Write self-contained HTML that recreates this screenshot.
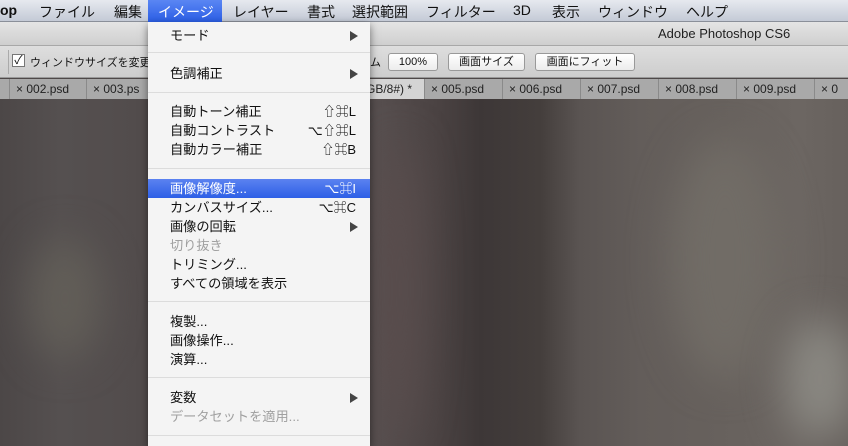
<!DOCTYPE html>
<html><head><meta charset="utf-8"><style>
*{margin:0;padding:0;box-sizing:border-box}
body{width:848px;height:446px;overflow:hidden;position:relative;font-family:"Liberation Sans","Noto Sans CJK JP",sans-serif;background:#4e4848}
.mb{position:absolute;left:0;top:0;width:848px;height:22px;background:linear-gradient(#e6e9ef,#c4cad6);border-bottom:1px solid #8a8f99;font-size:14px;color:#111}
.mb span{position:absolute;top:2px}
.tb{position:absolute;left:0;top:22px;width:848px;height:24px;background:linear-gradient(#e4e4e4,#cfcfcf);border-bottom:1px solid #a8a8a8;font-size:13px;color:#222}
.ob{position:absolute;left:0;top:46px;width:848px;height:32px;background:linear-gradient(#dedede,#cdcdcd);border-bottom:1px solid #999;font-size:11px;color:#111}
.btn{position:absolute;top:7px;height:18px;background:linear-gradient(#fff,#ececec);border:1px solid #999;border-radius:3px;font-size:11px;text-align:center;line-height:16px}
.tabs{position:absolute;left:0;top:79px;width:848px;height:20px;background:#a9a9a9;font-size:12px;color:#222}
.tab{position:absolute;top:0;height:20px;line-height:20px;border-right:1px solid #8a8a8a;padding-left:6px}
.cv{position:absolute;left:0;top:99px;width:848px;height:347px;overflow:hidden;background:linear-gradient(90deg,#4c4747 0,#555050 60px,#524c4c 140px,#574f4f 380px,#4a4242 440px,#3d3737 480px,#443e3c 540px,#5a5452 580px,#635d5a 640px,#67615d 720px,#6c6662 800px,#67615d 848px)}
.blob{position:absolute;border-radius:50%;filter:blur(20px)}
.menu{position:absolute;left:148px;top:22px;width:222px;height:424px;background:#f4f4f4;box-shadow:0 3px 8px rgba(0,0,0,.5);font-size:13.2px;color:#111}
.it{position:absolute;left:0;width:222px;height:19px;line-height:19px;padding-left:22px}
.it .k{position:absolute;right:14px;top:0;font-size:13px}
.ar{position:absolute;right:12px;top:5px;width:0;height:0;border-left:8px solid #444;border-top:5px solid transparent;border-bottom:5px solid transparent}
.g{color:#a0a0a0}
.sep{position:absolute;left:0;width:222px;height:1px;background:#dcdcdc}
.hl{background:linear-gradient(#5b82f0,#2d5fe6);color:#fff}
</style></head><body>
<div class="mb">
<span style="left:0;font-weight:bold">op</span>
<span style="left:39px">ファイル</span>
<span style="left:114px">編集</span>
<span style="left:148px;top:0;height:22px;width:74px;background:linear-gradient(#5a86f3,#2b5ee6)"></span>
<span style="left:158px;color:#fff">イメージ</span>
<span style="left:233px">レイヤー</span>
<span style="left:307px">書式</span>
<span style="left:352px">選択範囲</span>
<span style="left:426px">フィルター</span>
<span style="left:513px">3D</span>
<span style="left:552px">表示</span>
<span style="left:598px">ウィンドウ</span>
<span style="left:686px">ヘルプ</span>
</div>
<div class="tb"><span style="position:absolute;left:658px;top:4px">Adobe Photoshop CS6</span></div>
<div class="ob">
<span style="position:absolute;left:8px;top:4px;width:1px;height:24px;background:#aaa"></span>
<span style="position:absolute;left:12px;top:8px;width:13px;height:13px;border:1px solid #777;background:#fff;font-size:12px;line-height:11px;text-align:center">✓</span>
<span style="position:absolute;left:30px;top:8px">ウィンドウサイズを変更</span>
<span style="position:absolute;left:370px;top:8px">ム</span>
<div class="btn" style="left:388px;width:50px">100%</div>
<div class="btn" style="left:448px;width:77px">画面サイズ</div>
<div class="btn" style="left:535px;width:100px">画面にフィット</div>
</div>
<div class="tabs">
<div class="tab" style="left:0;width:10px;padding:0"></div>
<div class="tab" style="left:10px;width:77px">× 002.psd</div>
<div class="tab" style="left:87px;width:70px">× 003.ps</div>
<div class="tab" style="left:360px;width:65px;background:#d4d4d4">GB/8#) *</div>
<div class="tab" style="left:425px;width:78px">× 005.psd</div>
<div class="tab" style="left:503px;width:78px">× 006.psd</div>
<div class="tab" style="left:581px;width:78px">× 007.psd</div>
<div class="tab" style="left:659px;width:78px">× 008.psd</div>
<div class="tab" style="left:737px;width:78px">× 009.psd</div>
<div class="tab" style="left:815px;width:40px">× 0</div>
</div>
<div class="cv">
<div class="blob" style="left:30px;top:140px;width:70px;height:120px;background:#625e58"></div>
<div class="blob" style="left:670px;top:40px;width:110px;height:240px;background:#716c66"></div>
<div class="blob" style="left:785px;top:220px;width:70px;height:120px;background:#8a8882"></div>
<div class="blob" style="left:380px;top:40px;width:40px;height:300px;background:#5a4d4d"></div>
</div>
<div class="menu">
<div class="it" style="top:4px">モード<span class="ar"></span></div>
<div class="sep" style="top:30px"></div>
<div class="it" style="top:42px">色調補正<span class="ar"></span></div>
<div class="sep" style="top:70px"></div>
<div class="it" style="top:80px">自動トーン補正<span class="k">⇧⌘L</span></div>
<div class="it" style="top:99px">自動コントラスト<span class="k">⌥⇧⌘L</span></div>
<div class="it" style="top:118px">自動カラー補正<span class="k">⇧⌘B</span></div>
<div class="sep" style="top:146px"></div>
<div class="it hl" style="top:157px">画像解像度...<span class="k">⌥⌘I</span></div>
<div class="it" style="top:176px">カンバスサイズ...<span class="k">⌥⌘C</span></div>
<div class="it" style="top:195px">画像の回転<span class="ar"></span></div>
<div class="it g" style="top:214px">切り抜き</div>
<div class="it" style="top:233px">トリミング...</div>
<div class="it" style="top:252px">すべての領域を表示</div>
<div class="sep" style="top:279px"></div>
<div class="it" style="top:290px">複製...</div>
<div class="it" style="top:309px">画像操作...</div>
<div class="it" style="top:328px">演算...</div>
<div class="sep" style="top:355px"></div>
<div class="it" style="top:366px">変数<span class="ar"></span></div>
<div class="it g" style="top:385px">データセットを適用...</div>
<div class="sep" style="top:413px"></div>
</div>
</body></html>
